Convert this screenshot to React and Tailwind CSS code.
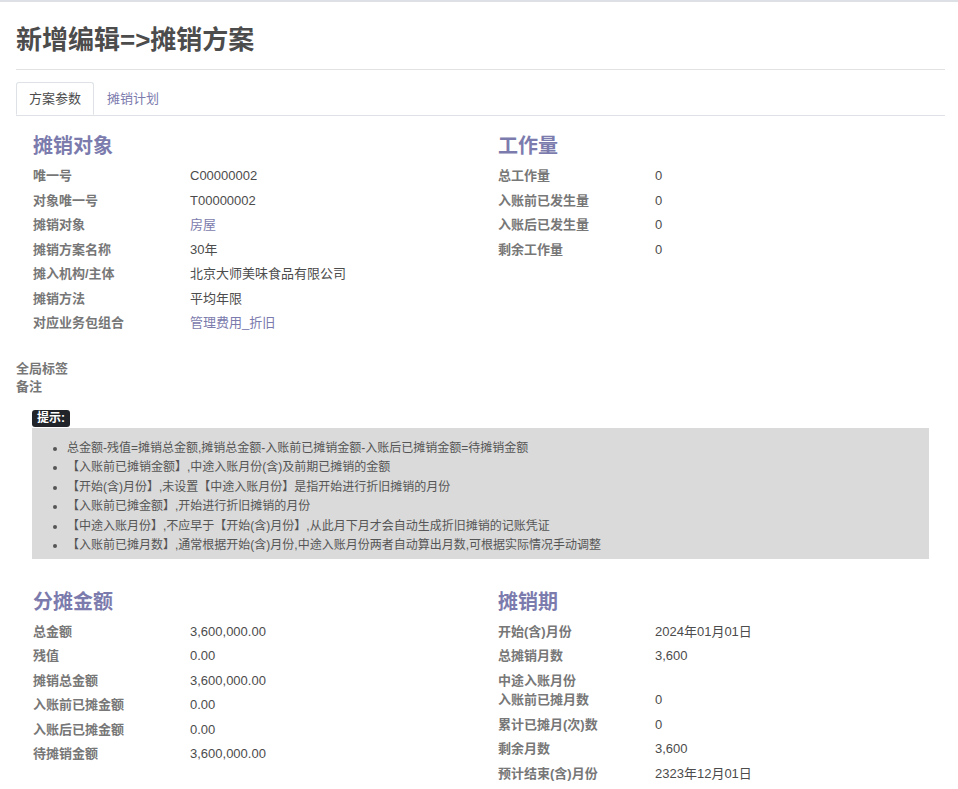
import React from 'react'

const FONT = { fontFamily: '"Liberation Sans", "Noto Sans CJK SC", sans-serif' }

const target = [
  ['唯一号', 'C00000002'],
  ['对象唯一号', 'T00000002'],
  ['摊销对象', '房屋', true],
  ['摊销方案名称', '30年'],
  ['摊入机构/主体', '北京大师美味食品有限公司'],
  ['摊销方法', '平均年限'],
  ['对应业务包组合', '管理费用_折旧', true],
]

const workload = [
  ['总工作量', '0'],
  ['入账前已发生量', '0'],
  ['入账后已发生量', '0'],
  ['剩余工作量', '0'],
]

const amounts = [
  ['总金额', '3,600,000.00'],
  ['残值', '0.00'],
  ['摊销总金额', '3,600,000.00'],
  ['入账前已摊金额', '0.00'],
  ['入账后已摊金额', '0.00'],
  ['待摊销金额', '3,600,000.00'],
]

const period = [
  ['开始(含)月份', '2024年01月01日'],
  ['总摊销月数', '3,600'],
  ['中途入账月份', null],
  ['入账前已摊月数', '0'],
  ['累计已摊月(次)数', '0'],
  ['剩余月数', '3,600'],
  ['预计结束(含)月份', '2323年12月01日'],
]

const tips = [
  '总金额-残值=摊销总金额,摊销总金额-入账前已摊销金额-入账后已摊销金额=待摊销金额',
  '【入账前已摊销金额】,中途入账月份(含)及前期已摊销的金额',
  '【开始(含)月份】,未设置【中途入账月份】是指开始进行折旧摊销的月份',
  '【入账前已摊金额】,开始进行折旧摊销的月份',
  '【中途入账月份】,不应早于【开始(含)月份】,从此月下月才会自动生成折旧摊销的记账凭证',
  '【入账前已摊月数】,通常根据开始(含)月份,中途入账月份两者自动算出月数,可根据实际情况手动调整',
]

function Group({ title, rows }) {
  return (
    <div>
      <h2 className="h-[28px] leading-[28px] mb-[4px] text-[20px] font-bold text-[#7c7bad]">{title}</h2>
      {rows.map(([label, value, link]) => (
        <div key={label} className={`flex text-[13px] ${value == null ? 'h-[19.5px]' : 'h-[24.5px]'}`}>
          <div className="w-[157px] shrink-0 leading-[24.5px] font-bold text-[#777]">{label}</div>
          <div className={`leading-[24.5px] ${link ? 'text-[#7c7bad]' : 'text-[#4c4c4c]'}`}>{value}</div>
        </div>
      ))}
    </div>
  )
}

export default function App() {
  return (
    <div className="min-h-[789px] bg-white border-t-2 border-[#dde0e5]" style={FONT}>
      <div className="pl-4 pr-[13px]">
        <h1 className="pt-[22px] leading-[32px] text-[26px] font-bold text-[#4c4c4c]">新增编辑=&gt;摊销方案</h1>
        <div className="mt-[13px] border-t border-[#e2e2e2]" />

        <div className="mt-[12px] flex border-b border-[#dee2e6] text-[13px]">
          <div className="-mb-px h-[33px] px-3 leading-[32px] bg-white border border-b-white border-[#dee2e6] rounded-t-[3px] text-[#4c4c4c]">方案参数</div>
          <div className="h-[33px] px-3 leading-[32px] border border-transparent text-[#7c7bad]">摊销计划</div>
        </div>

        <div className="pt-4 pl-[17px] grid grid-cols-[465px_1fr]">
          <Group title="摊销对象" rows={target} />
          <Group title="工作量" rows={workload} />
        </div>

        <div className="mt-6 text-[13px] leading-[18px] font-bold text-[#777]">
          <div>全局标签</div>
          <div>备注</div>
        </div>

        <div className="mx-4 mt-[14px]">
          <div className="w-fit h-[17px] px-[5px] leading-[17px] rounded-[3px] bg-[#212529] text-white text-[12px] font-bold">提示:</div>
          <div className="mt-px bg-[#dadada] pt-[11px] pb-[3px]">
            <ul className="list-disc pl-[35px] text-[12px] leading-[19.5px] text-[#555] marker:text-[#555]">
              {tips.map((t) => (
                <li key={t}>{t}</li>
              ))}
            </ul>
          </div>
        </div>

        <div className="mt-[29px] pl-[17px] grid grid-cols-[465px_1fr]">
          <Group title="分摊金额" rows={amounts} />
          <Group title="摊销期" rows={period} />
        </div>
      </div>
    </div>
  )
}
